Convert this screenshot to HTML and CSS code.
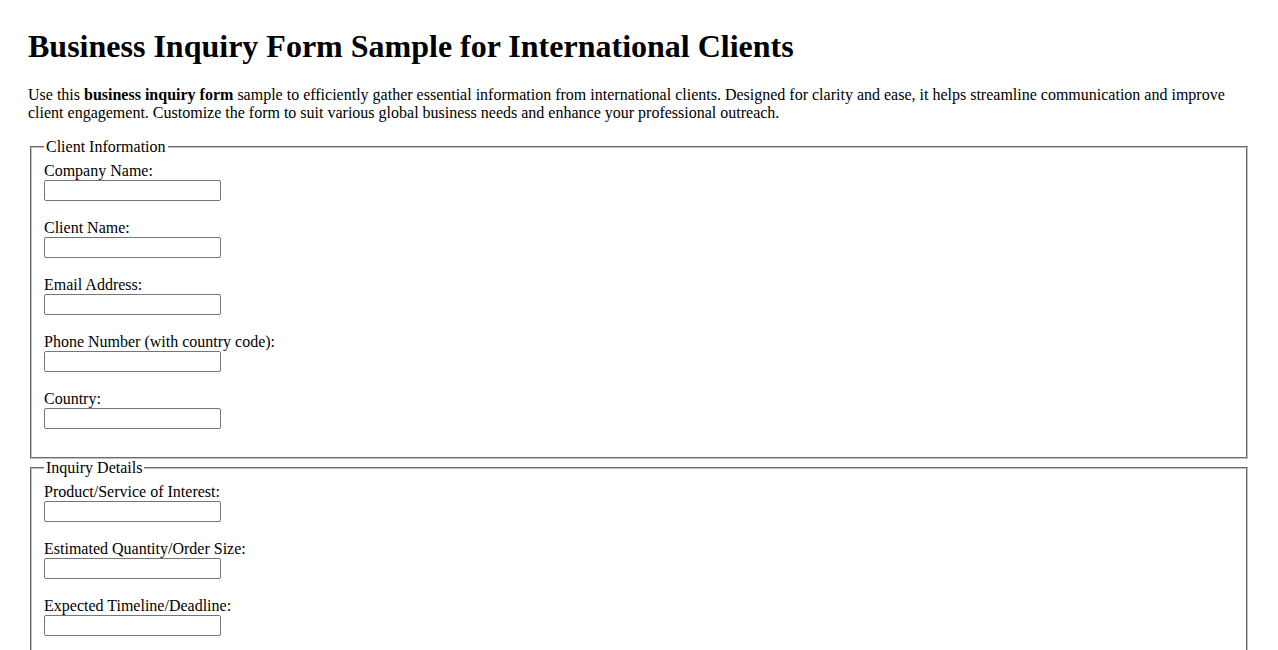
FILE: index.html
```html
<!DOCTYPE html>
<html lang="en">
<head>
    <meta charset="UTF-8">
    <title>Business Inquiry Form Sample for International Clients</title>
    <link rel="stylesheet" href="styles.css">
</head>
<body>
    <h1>Business Inquiry Form Sample for International Clients</h1>
    <p>Use this <strong>business inquiry form</strong> sample to efficiently gather essential information from international clients. Designed for clarity and ease, it helps streamline communication and improve client engagement. Customize the form to suit various global business needs and enhance your professional outreach.</p>

    <form>
        <fieldset>
            <legend>Client Information</legend>
            <label for="company">Company Name:</label><br>
            <input type="text" id="company" name="company"><br><br>

            <label for="client">Client Name:</label><br>
            <input type="text" id="client" name="client"><br><br>

            <label for="email">Email Address:</label><br>
            <input type="email" id="email" name="email"><br><br>

            <label for="phone">Phone Number (with country code):</label><br>
            <input type="tel" id="phone" name="phone"><br><br>

            <label for="country">Country:</label><br>
            <input type="text" id="country" name="country"><br><br>
        </fieldset>

        <fieldset>
            <legend>Inquiry Details</legend>
            <label for="product">Product/Service of Interest:</label><br>
            <input type="text" id="product" name="product"><br><br>

            <label for="quantity">Estimated Quantity/Order Size:</label><br>
            <input type="text" id="quantity" name="quantity"><br><br>

            <label for="timeline">Expected Timeline/Deadline:</label><br>
            <input type="text" id="timeline" name="timeline"><br><br>

            <label for="message">Additional Comments:</label><br>
            <textarea id="message" name="message" rows="4" cols="40"></textarea><br><br>
        </fieldset>

        <input type="submit" value="Submit Inquiry">
    </form>
</body>
</html>
```

FILE: styles.css
```css
body{
    margin: 28px;
    font-family: "Liberation Serif", "Times New Roman", serif;
    font-size: 16px;
    color: #000;
    background: #fff;
}

h1{
    font-size: 2em;
    margin: 0 0 0.67em;
}

p{
    margin: 1em 0;
}

fieldset{
    margin: 0 2px;
    padding: 0.35em 0.75em 0.625em;
    border: 2px groove rgb(192, 192, 192);
}

legend{
    padding: 0 2px;
}

input[type="text"],
input[type="email"],
input[type="tel"]{
    box-sizing: border-box;
    width: 177px;
    height: 21px;
    padding: 1px 2px;
    border: 1px solid #767676;
    border-radius: 2px;
    font: 13.33px Arial, "Liberation Sans", sans-serif;
    vertical-align: baseline;
}
```
